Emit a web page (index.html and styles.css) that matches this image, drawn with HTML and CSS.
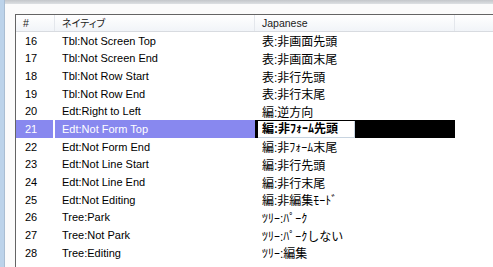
FILE: index.html
```html
<!DOCTYPE html>
<html lang="ja">
<head>
<meta charset="utf-8">
<title>List</title>
<link rel="stylesheet" href="styles.css">
</head>
<body>
<div class="window">
  <div class="frame-left"></div>
  <div class="content">
    <div class="topbar"></div>
    <div class="area">
      <div class="list">
        <div class="header">
          <div class="hcell c-num">#</div>
          <div class="hcell c-nat jp-h">ネイティブ</div>
          <div class="hcell c-jp">Japanese</div>
          <div class="hcell c-rest"></div>
        </div>
        <div class="row"><div class="cell c-num">16</div><div class="cell c-nat">Tbl:Not Screen Top</div><div class="cell c-jp jp">表:非画面先頭</div></div>
        <div class="row"><div class="cell c-num">17</div><div class="cell c-nat">Tbl:Not Screen End</div><div class="cell c-jp jp">表:非画面末尾</div></div>
        <div class="row"><div class="cell c-num">18</div><div class="cell c-nat">Tbl:Not Row Start</div><div class="cell c-jp jp">表:非行先頭</div></div>
        <div class="row"><div class="cell c-num">19</div><div class="cell c-nat">Tbl:Not Row End</div><div class="cell c-jp jp">表:非行末尾</div></div>
        <div class="row"><div class="cell c-num">20</div><div class="cell c-nat">Edt:Right to Left</div><div class="cell c-jp jp">編:逆方向</div></div>
        <div class="row selected"><div class="cell c-num">21</div><div class="cell c-nat">Edt:Not Form Top</div><div class="cell c-jp jp editing"><span class="editbox">編:非ﾌｫｰﾑ先頭</span></div></div>
        <div class="row"><div class="cell c-num">22</div><div class="cell c-nat">Edt:Not Form End</div><div class="cell c-jp jp">編:非ﾌｫｰﾑ末尾</div></div>
        <div class="row"><div class="cell c-num">23</div><div class="cell c-nat">Edt:Not Line Start</div><div class="cell c-jp jp">編:非行先頭</div></div>
        <div class="row"><div class="cell c-num">24</div><div class="cell c-nat">Edt:Not Line End</div><div class="cell c-jp jp">編:非行末尾</div></div>
        <div class="row"><div class="cell c-num">25</div><div class="cell c-nat">Edt:Not Editing</div><div class="cell c-jp jp">編:非編集ﾓｰﾄﾞ</div></div>
        <div class="row"><div class="cell c-num">26</div><div class="cell c-nat">Tree:Park</div><div class="cell c-jp jp">ﾂﾘｰ:ﾊﾟｰｸ</div></div>
        <div class="row"><div class="cell c-num">27</div><div class="cell c-nat">Tree:Not Park</div><div class="cell c-jp jp">ﾂﾘｰ:ﾊﾟｰｸしない</div></div>
        <div class="row"><div class="cell c-num">28</div><div class="cell c-nat">Tree:Editing</div><div class="cell c-jp jp">ﾂﾘｰ:編集</div></div>
      </div>
    </div>
  </div>
</div>
</body>
</html>
```

FILE: styles.css
```css
html, body {
  margin: 0;
  padding: 0;
  background: #ffffff;
  overflow: hidden;
}
body {
  width: 493px;
  height: 267px;
  font-family: "Liberation Sans", "Noto Sans CJK JP", sans-serif;
  font-size: 11px;
  color: #000;
}
.window {
  display: flex;
  height: 267px;
}
.frame-left {
  width: 4px;
  flex: 0 0 4px;
  background: #bcd3ea;
  border-right: 1px solid #a9bdd2;
}
.content {
  flex: 1;
  display: flex;
  flex-direction: column;
  min-width: 0;
}
.topbar {
  height: 4px;
  flex: 0 0 4px;
  background: linear-gradient(#c3c6ca, #dde0e3);
}
.area {
  flex: 1;
  padding: 10px 0 0 10px;
  background: #fbfbfb;
}
.list {
  background: #fff;
  border-top: 1px solid #646464;
  border-left: 1px solid #646464;
  height: 100%;
}
.header {
  display: flex;
  height: 16px;
  background: linear-gradient(#ffffff, #f1f4f8);
  border-bottom: 1px solid #d8dbe0;
}
.hcell {
  font-size: 10.5px;
  line-height: 16px;
  color: #1a1a1a;
  white-space: nowrap;
  border-right: 1px solid #e4e7ec;
}
.hcell.c-rest {
  flex: 1;
  border-right: 0;
}
.jp-h {
  font-family: "Noto Sans CJK JP", sans-serif;
  font-feature-settings: "palt";
  font-size: 10px;
}
.c-num {
  width: 39px;
  flex: 0 0 39px;
  padding-left: 7px;
  box-sizing: border-box;
}
.row .c-num { padding-left: 9px; }
.c-nat {
  width: 200px;
  flex: 0 0 200px;
  padding-left: 7px;
  box-sizing: border-box;
}
.c-jp {
  width: 200px;
  flex: 0 0 200px;
  padding-left: 7px;
  box-sizing: border-box;
}
.row {
  display: flex;
  height: 17.67px;
  align-items: center;
}
.cell {
  height: 100%;
  display: flex;
  align-items: center;
  white-space: nowrap;
}
.jp {
  font-size: 12px;
}
.selected .c-num,
.selected .c-nat {
  background: #8888ef;
  color: #fff;
}
.selected .c-num {
  border-right: 2px solid #fff;
}
.editing {
  background: #000;
  padding-left: 3px;
  align-items: flex-start;
}
.editbox {
  background: #fff;
  color: #000;
  font-weight: bold;
  height: 17px;
  line-height: 17px;
  width: 97px;
  box-sizing: border-box;
  padding-left: 4px;
  border-right: 1px solid #c8d4e0;
  border-bottom: 1px solid #c8d4e0;
  margin-top: 1px;
}
```
